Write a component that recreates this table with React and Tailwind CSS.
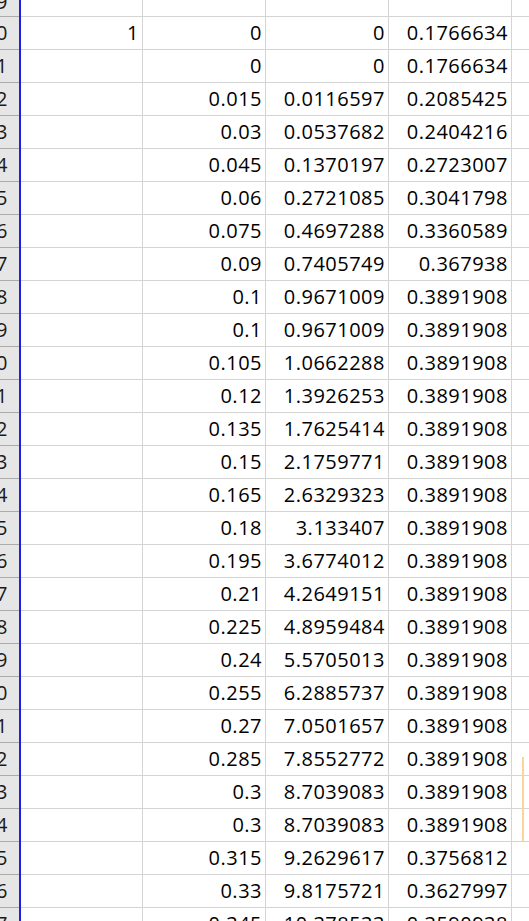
const rows = [
  ["1", "0", "0", "0.1766634"],
  ["", "0", "0", "0.1766634"],
  ["", "0.015", "0.0116597", "0.2085425"],
  ["", "0.03", "0.0537682", "0.2404216"],
  ["", "0.045", "0.1370197", "0.2723007"],
  ["", "0.06", "0.2721085", "0.3041798"],
  ["", "0.075", "0.4697288", "0.3360589"],
  ["", "0.09", "0.7405749", "0.367938"],
  ["", "0.1", "0.9671009", "0.3891908"],
  ["", "0.1", "0.9671009", "0.3891908"],
  ["", "0.105", "1.0662288", "0.3891908"],
  ["", "0.12", "1.3926253", "0.3891908"],
  ["", "0.135", "1.7625414", "0.3891908"],
  ["", "0.15", "2.1759771", "0.3891908"],
  ["", "0.165", "2.6329323", "0.3891908"],
  ["", "0.18", "3.133407", "0.3891908"],
  ["", "0.195", "3.6774012", "0.3891908"],
  ["", "0.21", "4.2649151", "0.3891908"],
  ["", "0.225", "4.8959484", "0.3891908"],
  ["", "0.24", "5.5705013", "0.3891908"],
  ["", "0.255", "6.2885737", "0.3891908"],
  ["", "0.27", "7.0501657", "0.3891908"],
  ["", "0.285", "7.8552772", "0.3891908"],
  ["", "0.3", "8.7039083", "0.3891908"],
  ["", "0.3", "8.7039083", "0.3891908"],
  ["", "0.315", "9.2629617", "0.3756812"],
  ["", "0.33", "9.8175721", "0.3627997"],
  ["", "0.345", "10.378533", "0.3590938"],
];

const widths = ["w-[122px]", "w-[123px]", "w-[123px]", "w-[123px]"];

function Row({ label, cells, h = "h-[33px]", align = "items-center" }) {
  return (
    <div className={`flex ${h} shrink-0`}>
      <div className={`w-[19px] shrink-0 bg-[#e6e6e6] border-b border-[#ababab] flex justify-end ${align} pr-[11px] overflow-hidden text-[#1a1a1a]`}>
        <span className="whitespace-nowrap">{label}</span>
      </div>
      <div className="w-[2px] shrink-0 bg-[#1f1fe6]" />
      {cells.map((c, i) => (
        <div
          key={i}
          className={`${widths[i]} shrink-0 border-r border-b border-[#d4d4d4] flex justify-end ${align} pr-[3px] whitespace-nowrap`}
        >
          {c}
        </div>
      ))}
      <div className="flex-1 border-b border-[#d4d4d4]" />
    </div>
  );
}

export default function App() {
  return (
    <div
      className="relative w-[529px] h-[921px] overflow-hidden bg-white text-black text-[20px] tracking-[0.5px] leading-none flex flex-col"
      style={{ fontFamily: '"Open Sans", "Liberation Sans", sans-serif' }}
    >
      <Row label="39" cells={["", "", "", ""]} h="h-[17px]" align="items-end pb-[4px]" />
      {rows.map((r, i) => (
        <Row key={i} label={String(40 + i)} cells={r} />
      ))}
      <div className="absolute left-[522px] top-[757px] w-[2px] h-[84px] bg-[#fbd39c]" />
    </div>
  );
}
